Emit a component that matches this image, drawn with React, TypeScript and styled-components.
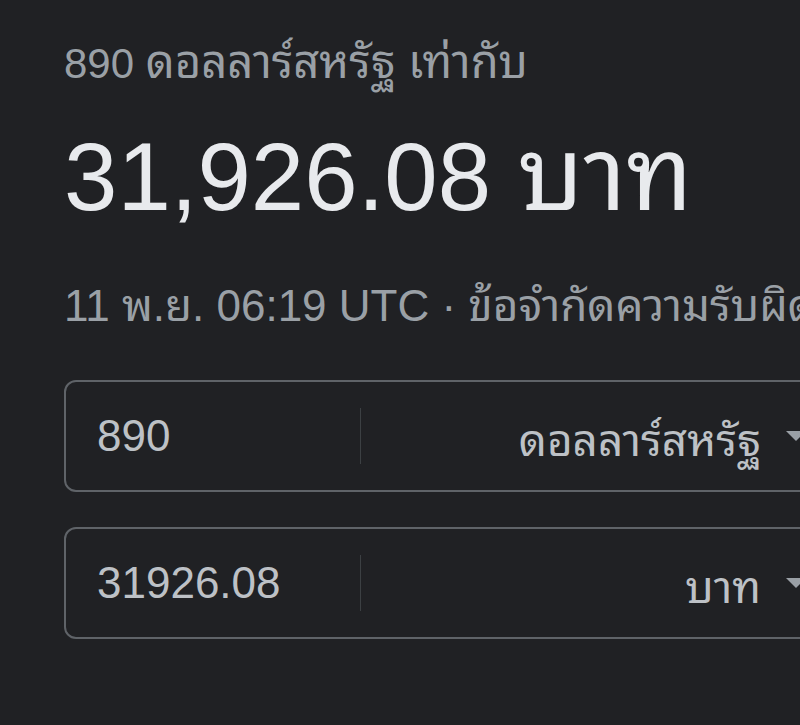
import { createGlobalStyle } from "styled-components";
import styled from "styled-components";

const GlobalStyle = createGlobalStyle`
    html, body {
        margin: 0;
        background: #202124;
        overflow: hidden;
    }

    body {
        font-family: Arial, "Liberation Sans", Tahoma, "Noto Sans Thai Looped", Loma, Garuda, "Noto Sans Thai", "Noto Sans", sans-serif;
    }
`;

interface FieldProps {
    value: string;
    currency: string;
}

function CurrencyField({ value, currency }: FieldProps) {
    return (
        <Field>
            <AmountInput defaultValue={value} aria-label="จำนวน" />
            <Divider />
            <CurrencySelect type="button">
                <CurrencyLabel>{currency}</CurrencyLabel>
                <Caret />
            </CurrencySelect>
        </Field>
    );
}

export default function App() {
    return (
        <>
            <GlobalStyle />
            <Page>
                <Summary>
                    <Subtitle>
                        890 <ThaiWord $scale={1.08}>ดอลลาร์สหรัฐ เท่ากับ</ThaiWord>
                    </Subtitle>
                    <Amount>
                        31,926.08 <ThaiWord $scale={1.06}>บาท</ThaiWord>
                    </Amount>
                    <Meta>11 พ.ย. 06:19 UTC · ข้อจำกัดความรับผิดชอบ</Meta>
                </Summary>
                <Converter>
                    <CurrencyField value="890" currency="ดอลลาร์สหรัฐ" />
                    <CurrencyField value="31926.08" currency="บาท" />
                </Converter>
            </Page>
        </>
    );
}

const Page = styled.main`
    padding: 36px 0 0 64px;
    width: 800px;
    height: 725px;
    box-sizing: border-box;
    overflow: hidden;
`;

const Summary = styled.section`
    display: flex;
    flex-direction: column;
`;

const Subtitle = styled.div`
    font-size: 42px;
    line-height: 56px;
    color: #9aa0a6;
    white-space: nowrap;
`;

const ThaiWord = styled.span<{ $scale: number }>`
    font-size: ${({ $scale }) => $scale}em;
    line-height: 0;
`;

const Amount = styled.div`
    margin-top: 29px;
    font-size: 96px;
    line-height: 112px;
    color: #e8eaed;
    white-space: nowrap;
`;

const Meta = styled.div`
    margin-top: 45px;
    font-size: 44px;
    line-height: 56px;
    color: #9aa0a6;
    white-space: nowrap;
`;

const Converter = styled.section`
    margin-top: 46px;
    display: flex;
    flex-direction: column;
    gap: 35px;
`;

const Field = styled.div`
    display: flex;
    align-items: center;
    width: 780px;
    height: 112px;
    box-sizing: border-box;
    border: 2px solid #5f6368;
    border-radius: 12px;
    flex-shrink: 0;
`;

const AmountInput = styled.input`
    width: 294px;
    box-sizing: border-box;
    padding: 0 0 0 31px;
    border: none;
    background: transparent;
    outline: none;
    font-family: inherit;
    font-size: 44px;
    color: #bdc1c6;
`;

const Divider = styled.div`
    width: 1px;
    height: 56px;
    background: #3c4043;
`;

const CurrencySelect = styled.button`
    flex: 1;
    display: flex;
    align-items: center;
    justify-content: flex-end;
    gap: 25px;
    padding: 0 36px 0 0;
    border: none;
    background: transparent;
    font-family: inherit;
    cursor: pointer;
`;

const CurrencyLabel = styled.span`
    font-size: 44px;
    color: #bdc1c6;
`;

const Caret = styled.span`
    width: 0;
    height: 0;
    border-left: 10px solid transparent;
    border-right: 10px solid transparent;
    border-top: 10px solid #9aa0a6;
`;
